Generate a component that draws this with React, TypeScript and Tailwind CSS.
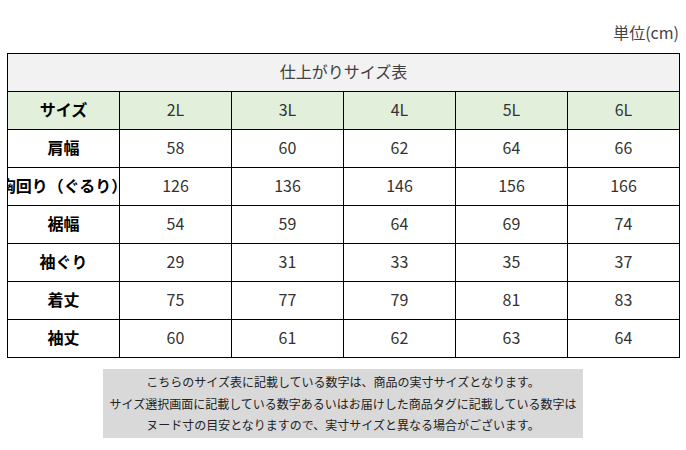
import React from 'react';

const sizes = ['2L', '3L', '4L', '5L', '6L'];

const rows: { label: string; values: number[] }[] = [
  { label: '肩幅', values: [58, 60, 62, 64, 66] },
  { label: '胸回り（ぐるり）', values: [126, 136, 146, 156, 166] },
  { label: '裾幅', values: [54, 59, 64, 69, 74] },
  { label: '袖ぐり', values: [29, 31, 33, 35, 37] },
  { label: '着丈', values: [75, 77, 79, 81, 83] },
  { label: '袖丈', values: [60, 61, 62, 63, 64] },
];

const font = { fontFamily: '"Noto Sans CJK JP", "Noto Sans", sans-serif' };

const App = () => {
  return (
    <div className="w-[686px] h-[450px] bg-white text-[#333]" style={font}>
      <div className="flex justify-end pr-[7px] pt-[22px] h-[53px]">
        <span className="text-[16px] leading-5 text-[#444]">単位(cm)</span>
      </div>

      <div className="pl-[7px]">
        <table className="border-collapse table-fixed w-[673px]">
          <tbody>
            <tr>
              <td colSpan={6} className="h-[38px] bg-[#f2f2f2] border border-black text-center text-[16px] text-[#404040] p-0 pb-[3px]">
                仕上がりサイズ表
              </td>
            </tr>
            <tr className="bg-[#e2efda]">
              <td className="w-[112px] h-[38px] border border-black text-center font-bold text-[16px] text-black p-0 pb-[3px]">
                サイズ
              </td>
              {sizes.map((s) => (
                <td key={s} className="w-[112px] h-[38px] border border-black text-center text-[16px] p-0 pb-[3px]">
                  {s}
                </td>
              ))}
            </tr>
            {rows.map((r) => (
              <tr key={r.label}>
                <td className="w-[112px] h-[38px] border border-black p-0 pb-[3px]">
                  <div className="flex justify-center overflow-hidden whitespace-nowrap font-bold text-[16px] text-black">
                    {r.label}
                  </div>
                </td>
                {r.values.map((v, i) => (
                  <td key={i} className="h-[38px] border border-black text-center text-[16px] p-0 pb-[3px]">
                    {v}
                  </td>
                ))}
              </tr>
            ))}
          </tbody>
        </table>
      </div>

      <div className="mt-[11px] ml-[103px] w-[480px] h-[69px] bg-[#d9d9d9] flex flex-col items-center justify-center text-[12px] leading-[21.5px] text-[#222]">
        <p>こちらのサイズ表に記載している数字は、商品の実寸サイズとなります。</p>
        <p>サイズ選択画面に記載している数字あるいはお届けした商品タグに記載している数字は</p>
        <p>ヌード寸の目安となりますので、実寸サイズと異なる場合がございます。</p>
      </div>
    </div>
  );
};

export default App;
